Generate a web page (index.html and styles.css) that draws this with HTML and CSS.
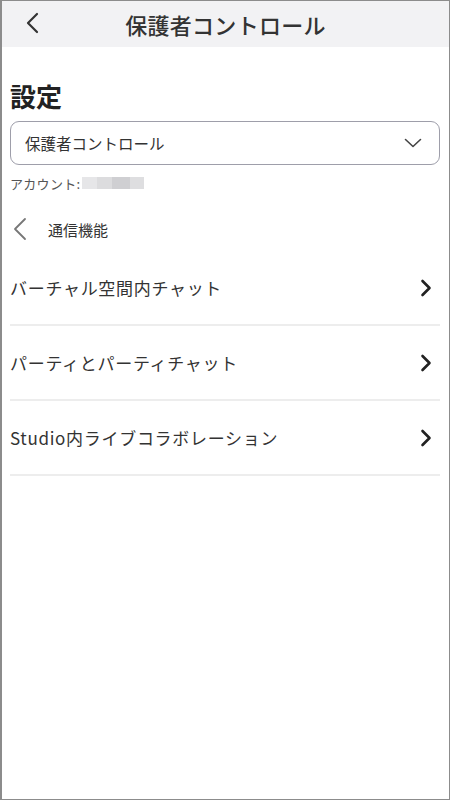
FILE: index.html
```html
<!DOCTYPE html>
<html lang="ja">
<head>
<meta charset="utf-8">
<link rel="stylesheet" href="styles.css">
</head>
<body>
<div class="frame">
  <header class="topbar">
    <svg class="back" width="16" height="22" viewBox="0 0 16 22"><path d="M12 2 L3 11 L12 20" fill="none" stroke="#333" stroke-width="2.2" stroke-linecap="round" stroke-linejoin="round"/></svg>
    <h1 class="title">保護者コントロール</h1>
  </header>
  <main class="content">
    <h2 class="heading">設定</h2>
    <div class="select">
      <span class="select-text">保護者コントロール</span>
      <svg width="18" height="10" viewBox="0 0 18 10"><path d="M1.5 1.5 L9 8.5 L16.5 1.5" fill="none" stroke="#444" stroke-width="1.6" stroke-linecap="round" stroke-linejoin="round"/></svg>
    </div>
    <div class="account">
      <span>アカウント:</span>
      <span class="blur"><i class="b1"></i><i class="b2"></i><i class="b3"></i><i class="b4"></i></span>
    </div>
    <div class="crumb">
      <svg width="14" height="24" viewBox="0 0 14 24"><path d="M12 2 L2 12 L12 22" fill="none" stroke="#777" stroke-width="1.8" stroke-linecap="round" stroke-linejoin="round"/></svg>
      <span class="crumb-text">通信機能</span>
    </div>
    <ul class="list">
      <li class="row"><span>バーチャル空間内チャット</span><svg width="12" height="18" viewBox="0 0 12 18"><path d="M2.5 2 L9.5 9 L2.5 16" fill="none" stroke="#222" stroke-width="2.6" stroke-linecap="round" stroke-linejoin="round"/></svg></li>
      <li class="row"><span>パーティとパーティチャット</span><svg width="12" height="18" viewBox="0 0 12 18"><path d="M2.5 2 L9.5 9 L2.5 16" fill="none" stroke="#222" stroke-width="2.6" stroke-linecap="round" stroke-linejoin="round"/></svg></li>
      <li class="row"><span>Studio内ライブコラボレーション</span><svg width="12" height="18" viewBox="0 0 12 18"><path d="M2.5 2 L9.5 9 L2.5 16" fill="none" stroke="#222" stroke-width="2.6" stroke-linecap="round" stroke-linejoin="round"/></svg></li>
    </ul>
  </main>
</div>
</body>
</html>
```
FILE: styles.css
```css
* { box-sizing: border-box; }
html, body { margin: 0; padding: 0; background: #fff; }
body { font-family: "Noto Sans CJK JP", "Noto Sans", sans-serif; color: #333; }
.frame {
  width: 450px;
  height: 800px;
  border: 1px solid #8c8c8c;
  border-left-width: 2px;
  overflow: hidden;
  background: #fff;
}
.topbar {
  height: 46px;
  background: #f2f2f4;
  display: flex;
  align-items: center;
  justify-content: center;
  position: relative;
}
.back { position: absolute; left: 23px; top: 11px; }
.title {
  margin: 0;
  font-size: 22px;
  font-weight: 500;
  color: #333;
  letter-spacing: 0.3px;
  line-height: 1;
}
.content { padding: 0 9px 0 8px; }
.heading {
  margin: 31px 0 0 0;
  font-size: 26px;
  font-weight: 700;
  color: #222;
  line-height: 36px;
}
.select {
  margin-top: 7px;
  height: 44px;
  border: 1px solid #9e9eaa;
  border-radius: 9px;
  display: flex;
  align-items: center;
  justify-content: space-between;
  padding: 0 17px 0 14px;
}
.select-text { font-size: 15.5px; color: #333; }
.account {
  margin-top: 9px;
  display: flex;
  align-items: center;
  font-size: 13px;
  color: #555;
  height: 18px;
  letter-spacing: 0.3px;
}
.blur { display: flex; margin-left: 2px; height: 12px; }
.blur i { display: block; height: 12px; }
.blur .b1 { width: 15px; background: #e6e6e8; }
.blur .b2 { width: 15px; background: #dcdcde; }
.blur .b3 { width: 18px; background: #cfcfd2; }
.blur .b4 { width: 14px; background: #dedee0; }
.crumb {
  margin-top: 25px;
  display: flex;
  align-items: center;
  height: 24px;
}
.crumb svg { margin-left: 3px; }
.crumb-text { margin-left: 21px; font-size: 15px; color: #333; }
.list { list-style: none; margin: 10px 0 0 0; padding: 0; }
.row {
  height: 75px;
  border-bottom: 2px solid #ededed;
  display: flex;
  align-items: center;
  justify-content: space-between;
  padding: 0 8px 0 0;
  font-size: 17px;
  color: #333;
  letter-spacing: 0.7px;
}
```
